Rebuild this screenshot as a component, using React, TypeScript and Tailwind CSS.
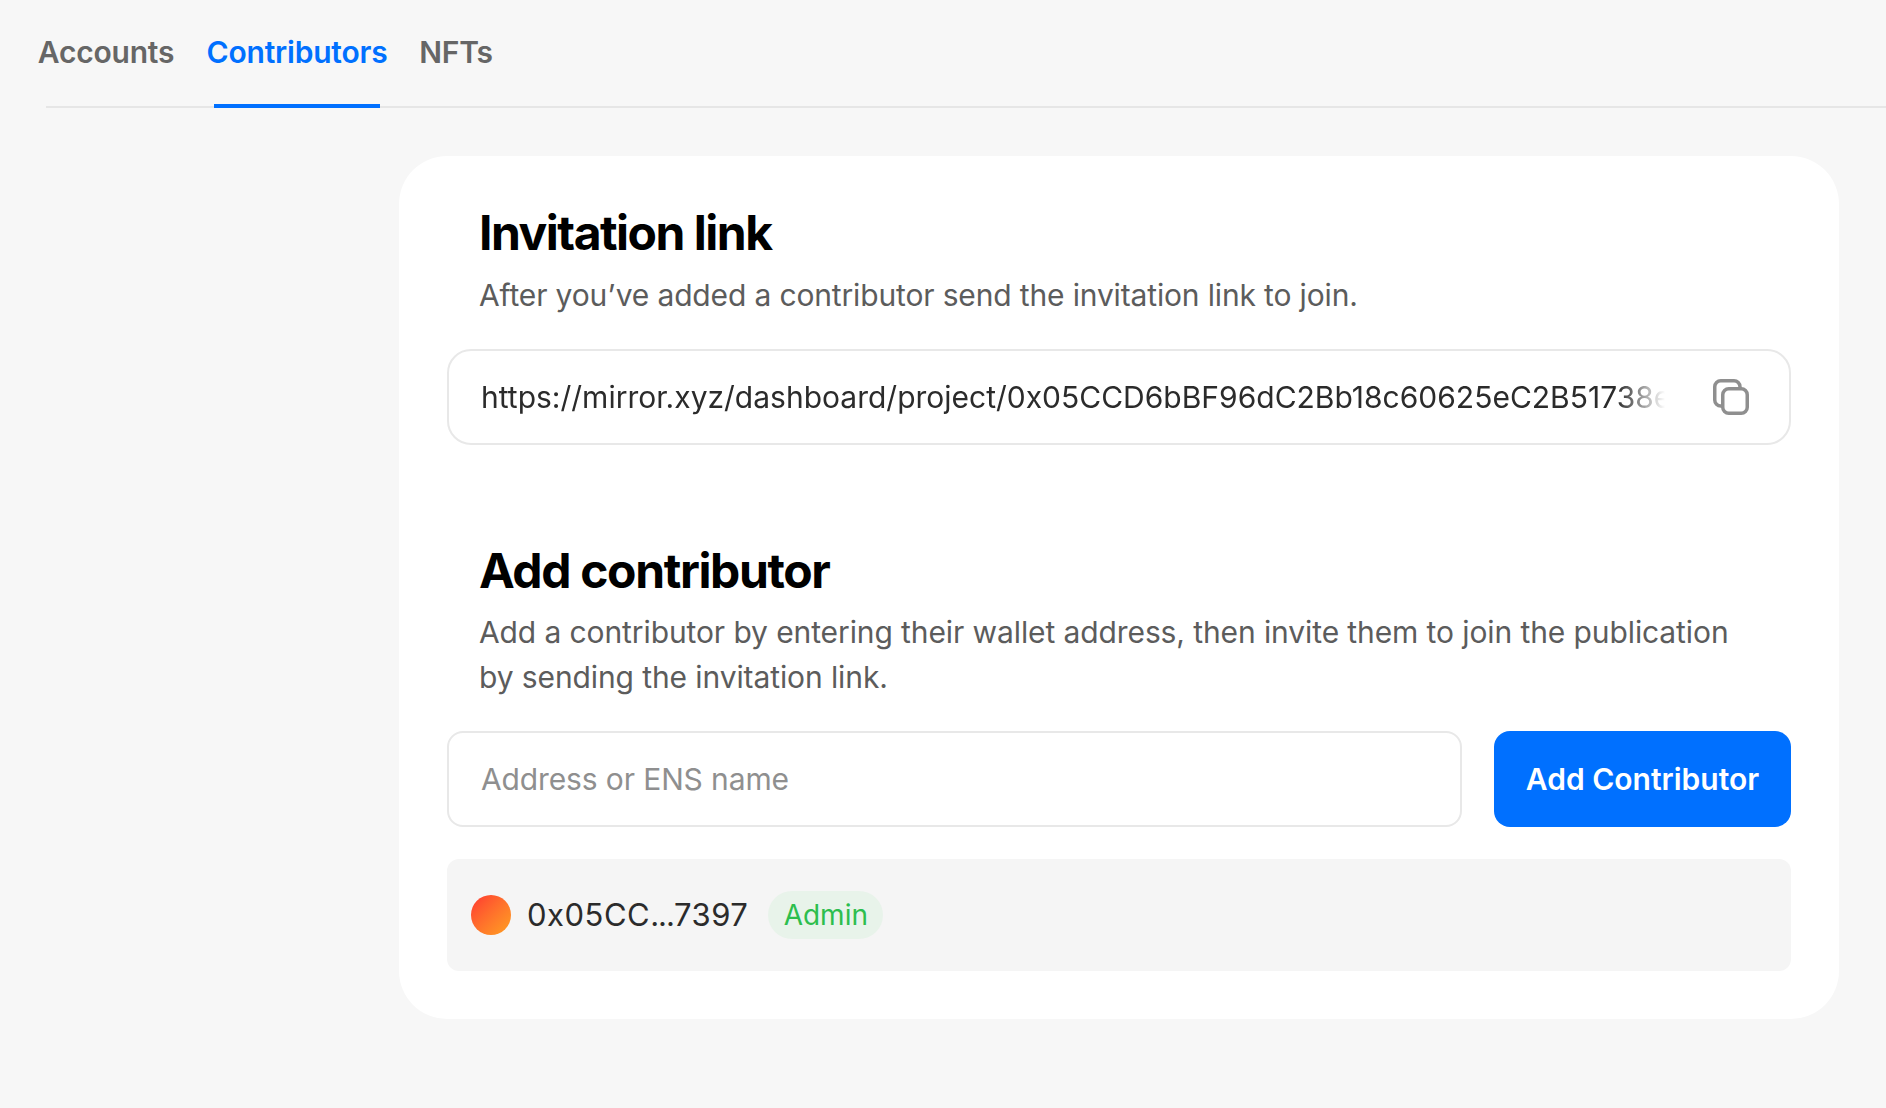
import React from 'react';

const FONT = "font-['Inter','Noto_Sans',sans-serif]";

function CopyIcon() {
  return (
    <svg width="36" height="36" viewBox="0 0 36 36" fill="none" stroke="#8f8f8f" strokeWidth="3.5">
      <rect x="9.75" y="9.75" width="24.5" height="24.5" rx="6" />
      <path d="M27 9.5V7.75A6 6 0 0 0 21 1.75H7.75A6 6 0 0 0 1.75 7.75V21A6 6 0 0 0 7.75 27H9.5" />
    </svg>
  );
}

const tabs = [
  { label: 'Accounts', width: 'w-[120px]', active: false },
  { label: 'Contributors', width: 'w-[166px]', active: true },
  { label: 'NFTs', width: 'w-[56px]', active: false },
];

export default function App() {
  return (
    <div className={`${FONT} min-h-[1108px] bg-[#f7f7f7]`}>
      <div className="ml-[46px] flex h-[108px] gap-12 border-b-2 border-[#e6e6e6]">
        {tabs.map((tab) => (
          <div
            key={tab.label}
            className={`-mb-[2px] flex h-[108px] justify-center whitespace-nowrap pt-[31px] text-[30px] font-semibold leading-[42px] tracking-[-0.2px] ${tab.width} ${
              tab.active ? 'border-b-4 border-[#0070ff] text-[#0070ff]' : 'text-[#666666]'
            }`}
          >
            {tab.label}
          </div>
        ))}
      </div>

      <div className="ml-[399px] mt-12 w-[1440px] rounded-[48px] bg-white p-12">
        <h2 className="ml-8 mt-px text-[48px] font-bold leading-[56px] tracking-[-1.5px] text-black">Invitation link</h2>
        <p className="ml-8 mt-3 text-[30px] leading-[44px] tracking-[-0.15px] text-[#5c5c5c]">
          After you’ve added a contributor send the invitation link to join.
        </p>

        <div className="mt-8 flex h-24 items-center justify-between rounded-3xl border-2 border-[#e8e8e8] pl-8 pr-10">
          <div className="w-[1184px] overflow-hidden whitespace-nowrap text-[30px] text-[#2b2b2b] [mask-image:linear-gradient(to_right,black_calc(100%-48px),transparent)]">
            https://mirror.xyz/dashboard/project/0x05CCD6bBF96dC2Bb18c60625eC2B51738e0c7397
          </div>
          <CopyIcon />
        </div>

        <h2 className="ml-8 mt-[98px] text-[48px] font-bold leading-[56px] tracking-[-1.36px] text-black">Add contributor</h2>
        <p className="ml-8 mt-[11px] w-[1275px] text-[30px] leading-[45px] tracking-[-0.1px] text-[#5c5c5c]">
          Add a contributor by entering their wallet address, then invite them to join the publication by sending the invitation link.
        </p>

        <div className="mt-[31px] flex gap-8">
          <input
            placeholder="Address or ENS name"
            className="h-24 flex-1 rounded-2xl border-2 border-[#e8e8e8] px-8 text-[30px] tracking-[-0.12px] outline-none placeholder:text-[#8f8f8f]"
          />
          <button type="button" className="h-24 w-[297px] rounded-2xl bg-[#0070ff] text-[30px] font-semibold text-white">
            Add Contributor
          </button>
        </div>

        <div className="mt-8 flex h-28 items-center rounded-xl bg-[#f5f5f5] pl-6">
          <div className="h-10 w-10 rounded-full bg-gradient-to-br from-[#ff3030] to-[#ff9f20]" />
          <span className="ml-4 text-[31px] tracking-[0.5px] text-[#2b2b2b]">
            0x05CC<span className="tracking-[-1px]">...</span>7397
          </span>
          <span className="ml-5 flex h-12 w-[115px] items-center justify-center rounded-full bg-[#e8f3ea] text-[28px] text-[#2dbe4e]">
            Admin
          </span>
        </div>
      </div>
    </div>
  );
}
